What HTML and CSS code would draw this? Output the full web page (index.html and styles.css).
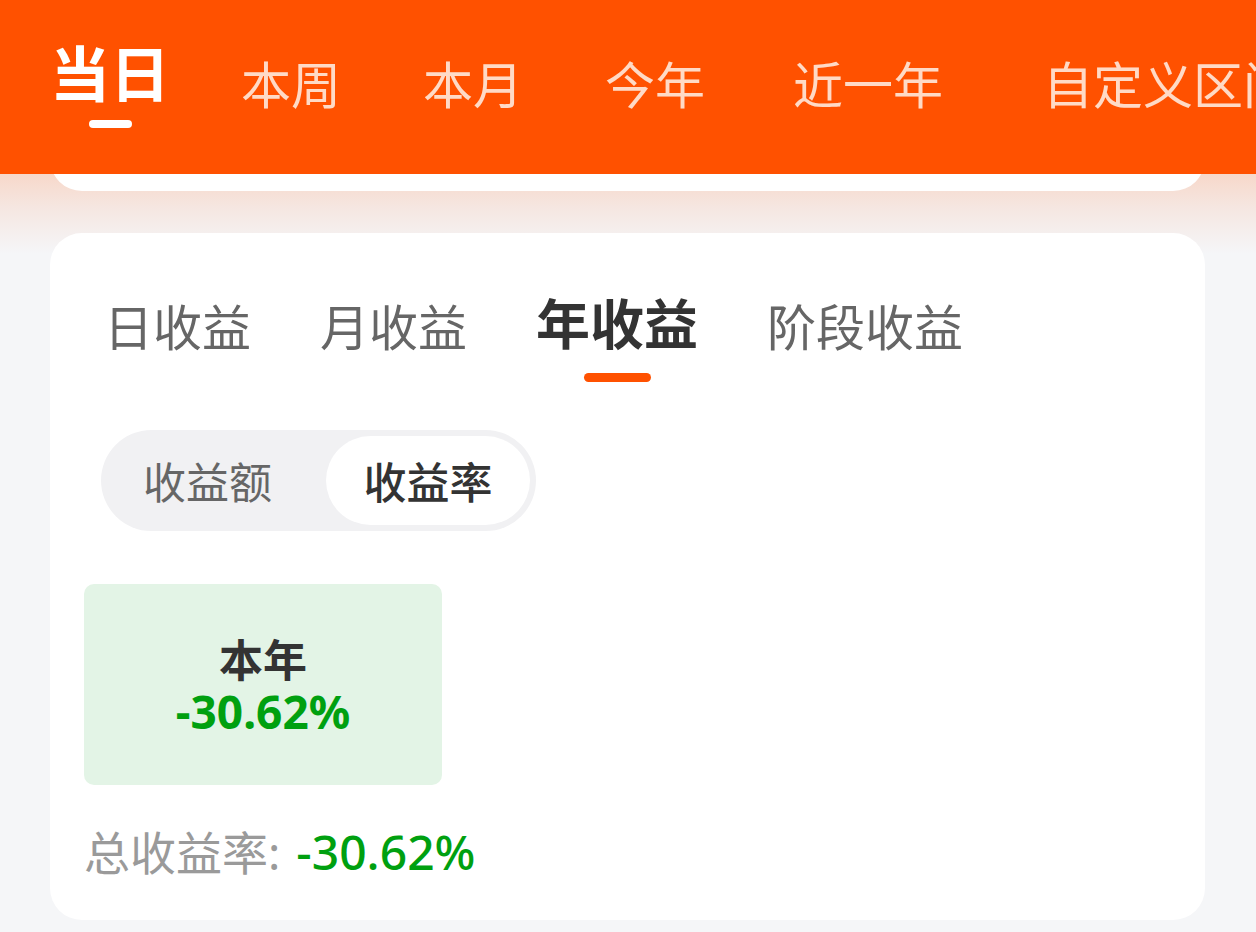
FILE: index.html
```html
<!DOCTYPE html>
<html lang="zh-CN">
<head>
<meta charset="utf-8">
<title>收益</title>
<link rel="stylesheet" href="styles.css">
</head>
<body>
<header class="top-bar">
  <nav class="top-tabs">
    <div class="top-tab top-tab--active">
      <span class="top-tab__text">当日</span>
      <span class="top-tab__bar"></span>
    </div>
    <div class="top-tab top-tab--w"><span class="top-tab__text">本周</span></div>
    <div class="top-tab top-tab--m"><span class="top-tab__text">本月</span></div>
    <div class="top-tab top-tab--y"><span class="top-tab__text">今年</span></div>
    <div class="top-tab top-tab--ly"><span class="top-tab__text">近一年</span></div>
    <div class="top-tab top-tab--c"><span class="top-tab__text">自定义区间</span></div>
  </nav>
</header>

<main class="content">
  <div class="stub"><div class="stub__card"></div></div>

  <section class="card">
    <div class="sub-tabs">
      <div class="sub-tab"><span class="sub-tab__text">日收益</span><span class="sub-tab__bar"></span></div>
      <div class="sub-tab"><span class="sub-tab__text">月收益</span><span class="sub-tab__bar"></span></div>
      <div class="sub-tab sub-tab--active"><span class="sub-tab__text">年收益</span><span class="sub-tab__bar"></span></div>
      <div class="sub-tab"><span class="sub-tab__text">阶段收益</span><span class="sub-tab__bar"></span></div>
    </div>

    <div class="segment">
      <div class="segment__item segment__item--left">收益额</div>
      <div class="segment__item segment__item--active">收益率</div>
    </div>

    <div class="year-box">
      <div class="year-box__label">本年</div>
      <div class="year-box__value">-30.62%</div>
    </div>

    <div class="total">
      <span class="total__label">总收益率: </span><span class="total__value">-30.62%</span>
    </div>
  </section>
</main>
</body>
</html>
```

FILE: styles.css
```css
* { box-sizing: border-box; }

html, body {
  margin: 0;
  padding: 0;
}

body {
  width: 1256px;
  height: 932px;
  overflow: hidden;
  background: #f5f6f8;
  font-family: "Noto Sans", "Noto Sans CJK SC", sans-serif;
}

.top-bar {
  height: 174px;
  background: #ff5100;
  overflow: hidden;
}

.top-tabs {
  display: flex;
  align-items: flex-start;
  padding: 41px 0 0 50px;
  white-space: nowrap;
}

.top-tab {
  display: flex;
  flex-direction: column;
  align-items: center;
  flex-shrink: 0;
  margin-top: 16px;
}

.top-tab__text {
  font-family: "Noto Sans CJK SC", sans-serif;
  font-size: 50px;
  line-height: 50px;
  color: #ffdac6;
}

.top-tab--active {
  margin-top: 0;
}

.top-tab--active .top-tab__text {
  font-size: 60px;
  line-height: 60px;
  font-weight: 700;
  color: #ffffff;
}

.top-tab__bar {
  width: 43px;
  height: 8px;
  margin-top: 19px;
  border-radius: 4px;
  background: #ffffff;
}

.top-tab--w { margin-left: 71px; }
.top-tab--m { margin-left: 82px; }
.top-tab--y { margin-left: 82px; }
.top-tab--ly { margin-left: 88px; }
.top-tab--c { margin-left: 100px; }

.content {
  background: linear-gradient(to bottom, #f7d8ca 0px, #f5e7e2 35px, #f5f6f8 80px, #f5f6f8 100%);
  height: 758px;
}

.stub {
  height: 17px;
  overflow: hidden;
  display: flex;
  flex-direction: column;
  justify-content: flex-end;
  margin: 0 51px 0 50px;
}

.stub__card {
  flex-shrink: 0;
  height: 64px;
  background: #ffffff;
  border-radius: 32px;
}

.card {
  margin: 42px 51px 0 50px;
  height: 687px;
  background: #ffffff;
  border-radius: 32px;
  padding: 62px 0 0 54px;
}

.sub-tabs {
  display: flex;
  align-items: flex-end;
  gap: 69px;
}

.sub-tab {
  display: flex;
  flex-direction: column;
  align-items: center;
}

.sub-tab__text {
  font-family: "Noto Sans CJK SC", sans-serif;
  font-size: 49px;
  line-height: 49px;
  color: #666666;
}

.sub-tab__bar {
  width: 67px;
  height: 9px;
  margin-top: 24px;
  border-radius: 5px;
  background: transparent;
}

.sub-tab--active .sub-tab__text {
  font-size: 54px;
  line-height: 54px;
  font-weight: 700;
  color: #333333;
}

.sub-tab--active .sub-tab__bar {
  background: #ff5100;
}

.segment {
  display: inline-flex;
  margin: 48px 0 0 -3px;
  padding: 6px;
  height: 101px;
  border-radius: 51px;
  background: #f1f1f3;
}

.segment__item {
  display: flex;
  align-items: center;
  height: 89px;
  font-family: "Noto Sans CJK SC", sans-serif;
  font-size: 43px;
  line-height: 43px;
  color: #666666;
}

.segment__item--left {
  padding: 0 54px 0 36px;
}

.segment__item--active {
  width: 204px;
  justify-content: center;
  background: #ffffff;
  border-radius: 45px;
  color: #333333;
  font-weight: 500;
}

.year-box {
  width: 358px;
  height: 201px;
  margin: 53px 0 0 -20px;
  background: #e3f4e6;
  border-radius: 10px;
  display: flex;
  flex-direction: column;
  align-items: center;
  justify-content: center;
}

.year-box__label {
  font-family: "Noto Sans CJK SC", sans-serif;
  font-size: 44px;
  line-height: 48px;
  font-weight: 700;
  color: #333333;
}

.year-box__value {
  margin-top: 4px;
  font-size: 46px;
  line-height: 50px;
  font-weight: 700;
  color: #00a010;
}

.total {
  margin: 39px 0 0 -20px;
  font-size: 46px;
  line-height: 56px;
  white-space: nowrap;
}

.total__label {
  color: #9a9a9a;
}

.total__value {
  margin-left: 4px;
  font-size: 48px;
  font-weight: 500;
  color: #00a010;
}
```
